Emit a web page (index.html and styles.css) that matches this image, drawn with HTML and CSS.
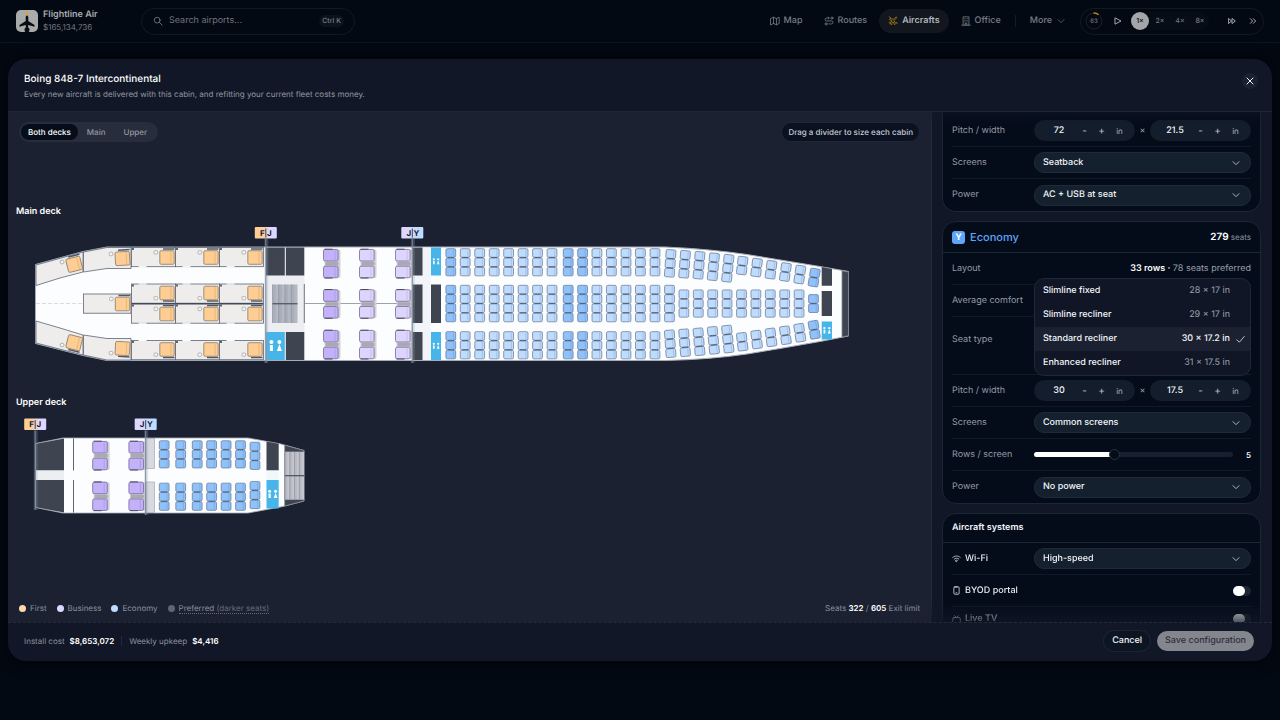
FILE: index.html
```html
<!DOCTYPE html>
<html lang="en">
<head>
<meta charset="utf-8">
<title>Flightline Air – Cabin configuration</title>
<link rel="stylesheet" href="styles.css">
</head>
<body>
<header class="topbar">
  <div class="brand">
    <svg class="brand-logo" viewBox="0 0 22 22" aria-hidden="true">
      <rect width="22" height="22" rx="5" fill="#a9abab"/>
      <rect x="10" y="2" width="2" height="4" fill="#d7a32c"/>
      <path d="M11 5.500c.9 0 1.300 1.200 1.300 2.600v3l6.200 4v1.600l-6.200-1.800-.2 2.400 1.500 1.700-.6 3h-4l-.6-3 1.500-1.700-.2-2.400-6.200 1.800v-1.600l6.200-4v-3c0-1.400.4-2.600 1.300-2.600z" fill="#0a0e14"/>
    </svg>
    <div class="brand-text">
      <strong>Flightline Air</strong>
      <span>$165,134,736</span>
    </div>
  </div>
  <label class="search">
    <svg class="icon" viewBox="0 0 24 24" aria-hidden="true"><circle cx="10" cy="10" r="7"/><path d="M15.500 15.500 22 22"/></svg>
    <input type="text" placeholder="Search airports..." aria-label="Search airports">
    <kbd>Ctrl K</kbd>
  </label>
  <nav class="nav">
    <a class="nav-link" href="#"><svg class="icon" viewBox="0 0 24 24" aria-hidden="true"><path d="M2 6l6.500-3 7 3L22 3v15l-6.500 3-7-3L2 21zM8.500 3v15M15.500 6v15"/></svg>Map</a>
    <a class="nav-link" href="#"><svg class="icon" viewBox="0 0 24 24" aria-hidden="true"><circle cx="5" cy="19" r="2.500"/><circle cx="19" cy="5" r="2.500"/><path d="M12 19h6a3.500 3.500 0 0 0 0-7H6a3.500 3.500 0 0 1 0-7h6M10 2.500 12.500 5 10 7.500"/></svg>Routes</a>
    <a class="nav-link is-active" href="#"><svg class="icon icon-gold" viewBox="0 0 24 24" aria-hidden="true"><path d="M15 10l4-4c1.500-1.500 2-3 1.500-3.500S18.500 2.500 17 4l-4 4-8-2-2 2 7 4-3 3-3-.5L2.500 16 6 18l2 3.500L9.500 20 9 17l3-3 4 7 2-2z"/><path d="M3 2l3 2M20 15l2 3"/></svg>Aircrafts</a>
    <a class="nav-link" href="#"><svg class="icon" viewBox="0 0 24 24" aria-hidden="true"><path d="M5 22V2h14v20M2 22h20M10 22v-4h4v4M9 6.500h1M14 6.500h1M9 10.500h1M14 10.500h1M9 14.500h1M14 14.500h1"/></svg>Office</a>
    <span class="nav-rule"></span>
    <button class="nav-link nav-more" type="button">More<svg class="icon icon-small" viewBox="0 0 24 24" aria-hidden="true"><path d="M3 8l9 9 9-9"/></svg></button>
  </nav>
  <div class="clock">
    <svg class="clock-ring" viewBox="0 0 18 18" role="img" aria-label="Progress 63">
      <circle cx="9" cy="9" r="8" fill="none" stroke="#1a212b" stroke-width="1"/>
      <path d="M8.500 1a8 8 0 0 1 5 1.600" fill="none" stroke="#c28b12" stroke-width="1.500"/>
      <text x="9" y="11" text-anchor="middle" class="clock-value">63</text>
    </svg>
    <button class="clock-btn" type="button" aria-label="Play"><svg class="icon icon-small" viewBox="0 0 24 24" aria-hidden="true"><path d="M4 3l17 9-17 9z"/></svg></button>
    <div class="speeds">
      <button class="speed is-on" type="button">1×</button>
      <button class="speed" type="button">2×</button>
      <button class="speed" type="button">4×</button>
      <button class="speed" type="button">8×</button>
    </div>
    <button class="clock-btn" type="button" aria-label="Fast forward"><svg class="icon icon-small" viewBox="0 0 24 24" aria-hidden="true"><path d="M2 5l9 7-9 7zM13 5l9 7-9 7z"/></svg></button>
    <button class="clock-btn" type="button" aria-label="Skip"><svg class="icon icon-small" viewBox="0 0 24 24" aria-hidden="true"><path d="M4 5l7 7-7 7M13 5l7 7-7 7"/></svg></button>
  </div>
</header>

<main class="stage">
  <section class="dialog" role="dialog" aria-labelledby="dialog-title">
    <header class="dialog-head">
      <div>
        <h1 id="dialog-title">Boing 848-7 Intercontinental</h1>
        <p>Every new aircraft is delivered with this cabin, and refitting your current fleet costs money.</p>
      </div>
      <button class="close" type="button" aria-label="Close"><svg class="icon icon-small" viewBox="0 0 24 24" aria-hidden="true"><path d="M3 3l18 18M21 3L3 21"/></svg></button>
    </header>

    <div class="dialog-body">
      <div class="canvas">
        <div class="canvas-bar">
          <div class="tabs">
            <button class="tab is-on" type="button">Both decks</button>
            <button class="tab" type="button">Main</button>
            <button class="tab" type="button">Upper</button>
          </div>
          <span class="hint">Drag a divider to size each cabin</span>
        </div>
        <div class="decks">
          <section class="deck">
            <h2>Main deck</h2>
            <svg id="main-deck" viewBox="16 224 904 140" role="img" aria-label="Main deck seat map"></svg>
          </section>
          <section class="deck">
            <h2>Upper deck</h2>
            <svg id="upper-deck" viewBox="16 415 904 102" role="img" aria-label="Upper deck seat map"></svg>
          </section>
        </div>
        <div class="canvas-foot">
          <ul class="legend">
            <li><i class="dot dot-first"></i>First</li>
            <li><i class="dot dot-business"></i>Business</li>
            <li><i class="dot dot-economy"></i>Economy</li>
            <li><i class="dot dot-preferred"></i><span class="preferred">Preferred <em>(darker seats)</em></span></li>
          </ul>
          <p>Seats <b>322</b> / <b>605</b> Exit limit</p>
        </div>
      </div>

      <aside class="side">
        <section class="card card-continued">
          <div class="row">
            <span class="label">Pitch / width</span>
            <div class="control pair">
              <span class="stepper"><input type="text" value="72" aria-label="First pitch"><button type="button" aria-label="Decrease">-</button><button type="button" aria-label="Increase">+</button><small>in</small></span>
              <span class="times">×</span>
              <span class="stepper"><input type="text" value="21.5" aria-label="First width"><button type="button" aria-label="Decrease">-</button><button type="button" aria-label="Increase">+</button><small>in</small></span>
            </div>
          </div>
          <div class="row">
            <label class="label" for="first-screens">Screens</label>
            <span class="control drop"><select id="first-screens"><option>Seatback</option></select><svg class="icon icon-small" viewBox="0 0 24 24" aria-hidden="true"><path d="M3 8l9 9 9-9"/></svg></span>
          </div>
          <div class="row">
            <label class="label" for="first-power">Power</label>
            <span class="control drop"><select id="first-power"><option>AC + USB at seat</option></select><svg class="icon icon-small" viewBox="0 0 24 24" aria-hidden="true"><path d="M3 8l9 9 9-9"/></svg></span>
          </div>
        </section>

        <section class="card">
          <header class="card-head">
            <h3 class="economy"><span class="badge">Y</span>Economy</h3>
            <span class="seat-total"><b>279</b> seats</span>
          </header>
          <div class="row">
            <span class="label">Layout</span>
            <span class="value"><b>33 rows ·</b> 78 seats preferred</span>
          </div>
          <div class="row"><span class="label">Average comfort</span></div>
          <div class="row row-tall">
            <span class="label">Seat type</span>
            <div class="control picker">
              <ul class="menu" role="listbox" aria-label="Seat type">
                <li role="option"><span>Slimline fixed</span><span class="dim">28 × 17 in</span></li>
                <li role="option"><span>Slimline recliner</span><span class="dim">29 × 17 in</span></li>
                <li role="option" aria-selected="true" class="is-on"><span>Standard recliner</span><span class="dim">30 × 17.2 in</span><svg class="icon icon-check" viewBox="0 0 24 24" aria-hidden="true"><path d="M2 13l7 6L22 4"/></svg></li>
                <li role="option"><span>Enhanced recliner</span><span class="dim">31 × 17.5 in</span></li>
              </ul>
            </div>
          </div>
          <div class="row">
            <span class="label">Pitch / width</span>
            <div class="control pair">
              <span class="stepper"><input type="text" value="30" aria-label="Economy pitch"><button type="button" aria-label="Decrease">-</button><button type="button" aria-label="Increase">+</button><small>in</small></span>
              <span class="times">×</span>
              <span class="stepper"><input type="text" value="17.5" aria-label="Economy width"><button type="button" aria-label="Decrease">-</button><button type="button" aria-label="Increase">+</button><small>in</small></span>
            </div>
          </div>
          <div class="row">
            <label class="label" for="eco-screens">Screens</label>
            <span class="control drop"><select id="eco-screens"><option>Common screens</option></select><svg class="icon icon-small" viewBox="0 0 24 24" aria-hidden="true"><path d="M3 8l9 9 9-9"/></svg></span>
          </div>
          <div class="row">
            <label class="label" for="eco-rows">Rows / screen</label>
            <div class="control slide"><input id="eco-rows" type="range" min="1" max="11" value="5"><output for="eco-rows">5</output></div>
          </div>
          <div class="row">
            <label class="label" for="eco-power">Power</label>
            <span class="control drop"><select id="eco-power"><option>No power</option></select><svg class="icon icon-small" viewBox="0 0 24 24" aria-hidden="true"><path d="M3 8l9 9 9-9"/></svg></span>
          </div>
        </section>

        <section class="card">
          <header class="card-head card-head-plain"><h3>Aircraft systems</h3></header>
          <div class="row">
            <label class="label system" for="wifi"><svg class="icon" viewBox="0 0 24 24" aria-hidden="true"><path d="M2 9c6-5 14-5 20 0M6 13.500c4-3 8-3 12 0M9.500 17.500c2-1.500 3-1.500 5 0L12 20z"/></svg>Wi-Fi</label>
            <span class="control drop"><select id="wifi"><option>High-speed</option></select><svg class="icon icon-small" viewBox="0 0 24 24" aria-hidden="true"><path d="M3 8l9 9 9-9"/></svg></span>
          </div>
          <div class="row">
            <label class="label system" for="byod"><svg class="icon" viewBox="0 0 24 24" aria-hidden="true"><rect x="5" y="2" width="14" height="20" rx="3"/><path d="M10 3h4M11 18h2"/></svg>BYOD portal</label>
            <input class="switch" id="byod" type="checkbox">
          </div>
          <div class="row row-short">
            <label class="label system" for="tv"><svg class="icon" viewBox="0 0 24 24" aria-hidden="true"><rect x="2" y="7" width="20" height="14" rx="3"/><path d="M7 2l5 5 5-5"/></svg>Live TV</label>
            <input class="switch" id="tv" type="checkbox">
          </div>
        </section>
      </aside>
    </div>

    <footer class="dialog-foot">
      <p class="costs">Install cost <b>$8,653,072</b><i></i>Weekly upkeep <b>$4,416</b></p>
      <div class="actions">
        <button class="btn" type="button">Cancel</button>
        <button class="btn btn-primary" type="button">Save configuration</button>
      </div>
    </footer>
  </section>
</main>
<script src="cabin.js"></script>
</body>
</html>
```

FILE: styles.css
```css
* { box-sizing: border-box; }
body {
  margin: 0;
  height: 100vh;
  display: flex;
  flex-direction: column;
  background: #030912;
  color: #f1f5f9;
  font: 9px/14px Inter, "Liberation Sans", sans-serif;
  text-rendering: geometricPrecision;
}
h1, h2, h3, p, ul { margin: 0; padding: 0; }
ul { list-style: none; }
button, input, select { font: inherit; color: inherit; margin: 0; text-rendering: inherit; }
button { border: 0; padding: 0; background: none; }
a { color: inherit; text-decoration: none; }
.icon { width: 10px; height: 10px; flex: none; fill: none; stroke: currentColor; stroke-width: 2; stroke-linecap: round; stroke-linejoin: round; }
.icon-small { width: 8px; height: 8px; stroke-width: 3; }

/* Top bar */
.topbar { flex: none; display: flex; align-items: center; height: 43px; padding: 0 16px; border-bottom: 1px solid #0e151e; color: #777d86; }
.brand { display: flex; align-items: center; gap: 5px; width: 125px; }
.brand-logo { width: 22px; height: 22px; flex: none; }
.brand-text { display: flex; flex-direction: column; line-height: 12px; font-size: 8px; }
.brand-text strong { font-size: 9px; font-weight: 600; color: #a9acb1; }
.search { display: flex; align-items: center; gap: 6px; width: 214px; height: 27px; padding: 0 10px 0 11px; border: 1px solid #121922; border-radius: 14px; }
.search input { flex: 1; min-width: 0; padding: 0; border: 0; background: none; outline: 0; }
.search input::placeholder { color: #6e747d; opacity: 1; }
.search kbd { padding: 0 3px; border-radius: 6px; background: #0c131c; font: 500 7px/12px Inter, sans-serif; }
.nav { display: flex; align-items: center; gap: 3px; margin-left: auto; font-weight: 500; }
.nav-link { display: flex; align-items: center; gap: 4px; height: 24px; padding: 0 9px; border-radius: 12px; }
.nav-link.is-active { background: #11161f; color: #b2b5ba; font-weight: 600; }
.icon-gold { color: #b07d10; }
.nav-rule { width: 1px; height: 12px; margin: 0 2px; background: #141a23; }
.nav-more { gap: 5px; }
.nav-more .icon { stroke-width: 2; }
.clock { display: flex; align-items: center; gap: 5px; height: 27px; margin-left: 6px; padding: 0 2px 0 4px; border: 1px solid #121922; border-radius: 14px; color: #a5a8ad; }
.clock-ring { width: 18px; height: 18px; margin-right: 2px; }
.clock-value { fill: #6e747d; font: 500 6px Inter, sans-serif; }
.clock-btn { display: grid; place-items: center; width: 16px; height: 16px; }
.speeds { display: flex; align-items: center; gap: 2px; margin: 0 10px 0 0; border-radius: 10px; background: #070d16; }
.speed { width: 18px; height: 18px; border-radius: 50%; font-size: 7px; font-weight: 500; line-height: 18px; color: #6e747d; text-align: center; }
.speed.is-on { background: #a4a7aa; color: #10151c; font-weight: 600; }

/* Dialog */
.stage { flex: 1; min-height: 0; display: flex; padding: 16px 8px 59px; }
.dialog { flex: 1; min-width: 0; display: flex; flex-direction: column; overflow: hidden; border-radius: 18px; background: #111726; box-shadow: 0 0 16px #01040a; }
.dialog-head { flex: none; display: flex; align-items: center; justify-content: space-between; height: 53px; padding: 1px 14px 0 16px; border-bottom: 1px solid #1d2433; }
.dialog-head h1 { font-size: 10px; font-weight: 500; line-height: 16px; color: #fff; }
.dialog-head p { font-size: 8px; line-height: 14px; color: #9197a3; }
.close { display: grid; place-items: center; width: 16px; height: 16px; margin-bottom: 10px; border-radius: 50%; background: #1a2130; }
.dialog-body { flex: 1; min-height: 0; display: grid; grid-template-columns: minmax(0, 1fr) 341px; }
.dialog-foot { flex: none; display: flex; align-items: center; justify-content: space-between; height: 39px; padding: 0 18px 2px 16px; border-top: 1px dashed #242c3a; }

/* Canvas */
.canvas { display: flex; flex-direction: column; padding: 10px 11px 7px 8px; background: #1b2130; min-height: 0; }
.canvas-bar, .canvas-foot { display: flex; align-items: center; justify-content: space-between; }
.tabs { display: flex; margin-left: 3px; padding: 2px; border-radius: 10px; background: #272d3b; }
.tab { height: 16px; padding: 0 7px; border-radius: 8px; font-size: 8px; font-weight: 500; line-height: 16px; color: #949aa6; }
.tab + .tab { padding: 0 9px; }
.tab.is-on { background: #060d1a; color: #fff; }
.hint { padding: 2px 6px; border: 1px solid #1d2736; border-radius: 10px; background: #0a1120; font-size: 8px; font-weight: 500; color: #c7cbd2; }
.decks { flex: 1; min-height: 0; display: flex; flex-direction: column; justify-content: center; gap: 32px; padding-bottom: 22px; }
.deck h2 { margin-bottom: 5px; font-size: 9px; font-weight: 600; line-height: 14px; color: #fff; }
.deck svg { display: block; width: 100%; height: auto; }
.tag-text { font: 700 8px Inter, sans-serif; fill: #171c2b; }
.canvas-foot { font-size: 8px; color: #8a909c; }
.canvas-foot b { color: #fff; font-weight: 600; }
.legend { display: flex; gap: 10px; margin-left: 3px; }
.legend li { display: flex; align-items: center; gap: 4px; }
.dot { width: 7px; height: 7px; border-radius: 50%; }
.dot-first { background: #fed7aa; }
.dot-business { background: #ddd6fe; }
.dot-economy { background: #bfdbfe; }
.dot-preferred { background: #5f6673; }
.preferred { line-height: 10px; border-bottom: 1px dotted #636977; }
.preferred em { font-style: normal; color: #666d79; }

/* Settings */
.side { display: flex; flex-direction: column; gap: 9px; padding: 0 11px 0 10px; overflow: hidden; border-left: 1px solid #222938; -webkit-mask-image: linear-gradient(#0008, #000 12px, #000 calc(100% - 22px), #0004); mask-image: linear-gradient(#0008, #000 12px, #000 calc(100% - 22px), #0004); }
.card { flex: none; padding: 0 9px; border: 1px solid #1c2635; border-radius: 14px; background: #040b19; }
.card-continued { padding-top: 3px; border-top: 0; border-radius: 0 0 14px 14px; }
.card-head { display: flex; align-items: center; justify-content: space-between; height: 31px; margin: 0 -9px; padding: 0 9px; border-bottom: 1px solid #1c2635; }
.card-head-plain { height: 29px; }
.card-head h3 { display: flex; align-items: center; gap: 5px; font-size: 9px; font-weight: 600; }
.card-head .economy { font-size: 11px; font-weight: 500; color: #60a5fa; }
.badge { width: 13px; height: 13px; border-radius: 3px; background: #60a5fa; color: #fff; font-size: 9px; font-weight: 700; line-height: 13px; text-align: center; }
.seat-total { font-size: 8px; color: #8a919e; }
.seat-total b { font-size: 10px; font-weight: 600; color: #fff; }
.row { display: flex; align-items: center; justify-content: space-between; min-height: 32px; border-bottom: 1px solid #101927; }
.row:last-child { border-bottom: 0; }
.row-tall { min-height: 58px; align-items: flex-start; padding-top: 12px; }
.row-tall .label { line-height: 21px; }
.row-short { min-height: 24px; }
.label { color: #949ba7; }
.system { display: flex; align-items: center; gap: 4px; color: #e8ebf0; font-weight: 500; }
.system .icon { width: 9px; height: 9px; }
.value { color: #9aa0ac; }
.value b { font-weight: 600; color: #fff; }
.control { width: 217px; height: 21px; }
.drop { display: flex; align-items: center; padding-right: 10px; border: 1px solid #202b3a; border-radius: 10px; background: #15202e; }
.drop select { flex: 1; appearance: none; height: 19px; padding: 0 8px; border: 0; outline: 0; background: none; color: #f1f5f9; font-weight: 500; }
.drop .icon { color: #aeb4bf; }
.pair { display: flex; align-items: center; justify-content: space-between; }
.stepper { display: grid; grid-template-columns: 34px 17px 17px 19px; align-items: center; width: 101px; height: 21px; padding-left: 8px; border-radius: 11px; background: #131d2b; text-align: center; color: #aeb4bf; }
.stepper input { width: 100%; min-width: 0; padding: 0; border: 0; background: none; text-align: center; font-weight: 500; color: #f1f5f9; }
.stepper button { font-size: 10px; font-weight: 500; }
.stepper small { font-size: 8px; }
.times { font-size: 9px; color: #9aa0ac; }
.slide { display: flex; align-items: center; justify-content: space-between; }
.slide input { appearance: none; width: 199px; height: 5px; border-radius: 3px; background: linear-gradient(90deg, #fff 40%, #16202e 40%); }
.slide input::-webkit-slider-thumb { appearance: none; width: 11px; height: 11px; border: 1px solid #2a3342; border-radius: 50%; background: #040b19; }
.slide output { font-size: 8px; font-weight: 600; }
.switch { appearance: none; display: flex; width: 18px; height: 10px; border-radius: 5px; background: #1d2532; }
.switch::before { content: ""; width: 12px; height: 10px; border-radius: 5px; background: #fff; }
.picker { position: relative; border-radius: 10px; background: #15202e; }
.menu { position: absolute; left: 0; right: 0; top: -51px; z-index: 2; overflow: hidden; border: 1px solid #202838; border-radius: 10px; background: #111626; }
.menu li { display: grid; grid-template-columns: 1fr auto 13px; align-items: center; column-gap: 6px; height: 24px; padding: 0 1px 0 8px; font-weight: 500; }
.menu .dim { font-weight: 400; color: #9aa0ac; }
.menu .is-on { background: #1b2130; }
.menu .is-on .dim { font-weight: 500; color: #f1f5f9; }
.icon-check { width: 9px; height: 9px; }

/* Footer */
.costs { display: flex; align-items: center; gap: 5px; font-size: 8px; color: #8a919e; }
.costs b { font-weight: 600; color: #fff; }
.costs i { width: 1px; height: 10px; margin: 0 2px; background: #232b3a; }
.actions { display: flex; gap: 7px; }
.btn { height: 20px; padding: 0 8px; border-radius: 10px; background: #0d1422; box-shadow: 0 0 0 1px #1c2433; font-weight: 500; }
.btn-primary { background: #84868e; box-shadow: none; color: #2b303c; }
```

FILE: cabin.js
```js
const NS = 'http://www.w3.org/2000/svg';
const COLORS = {
  dark: '#3f4550', lav: '#47b5ea', pale: '#eceef2', line: '#5d6573',
  eco: '#bfdbfe', ecoPref: '#8fc1fb', biz: '#ddd5fd', bizPref: '#c3b2fa', first: '#fdcd93'
};

function add(parent, name, attrs, text) {
  const node = document.createElementNS(NS, name);
  for (const key in attrs) node.setAttribute(key, attrs[key]);
  if (text) node.textContent = text;
  parent.appendChild(node);
  return node;
}
function box(p, x, y, w, h, fill, extra) {
  return add(p, 'rect', Object.assign({ x, y, width: w, height: h, fill }, extra));
}
function poly(p, points, fill, stroke) {
  return add(p, 'polygon', { points, fill, stroke: stroke || 'none', 'stroke-width': 0.8 });
}
function line(p, x1, y1, x2, y2, stroke, width, dash) {
  return add(p, 'line', { x1, y1, x2, y2, stroke, 'stroke-width': width || 0.8, 'stroke-dasharray': dash || 'none' });
}

// A block of economy seats, stacked across the aisle direction.
function ecoBlock(p, cx, cy, count, turn, preferred) {
  const g = add(p, 'g', { transform: `translate(${cx} ${cy}) rotate(${turn || 0})` });
  for (let i = 0; i < count; i++) {
    const y = (i - count / 2) * 9.3;
    box(g, -4.9, y + 0.4, 9.8, 8.6, preferred ? COLORS.ecoPref : COLORS.eco,
      { rx: 1.4, stroke: '#64748b', 'stroke-width': 0.7 });
    line(g, 2.7, y + 1.2, 2.7, y + 8.3, preferred ? '#6fa8ec' : '#93b6e6', 0.7);
    if (i) line(g, -3, y, 3, y, '#4b586c', 0.8);
  }
}

// Two business seats with the console between them.
function bizPair(p, x, y, preferred) {
  box(p, x + 1, y + 0.5, 16, 28.5, '#d3d2da', { rx: 2 });
  box(p, x + 2, y + 13, 13, 3.4, '#aaa9b2');
  for (const top of [y, y + 16.8]) {
    box(p, x, top + 0.4, 14.6, 11.6, preferred ? COLORS.bizPref : COLORS.biz,
      { rx: 1.6, stroke: '#756c92', 'stroke-width': 0.8 });
    line(p, x + 11.5, top + 1.5, x + 11.5, top + 11, preferred ? '#a594e2' : '#c0b6e6', 0.7);
  }
  line(p, x + 1, y + 0.2, x + 9, y + 0.2, '#514b66', 1);
  line(p, x + 1, y + 29, x + 9, y + 29, '#514b66', 1);
}

// A first class chair drawn round its centre.
function chair(p, cx, cy, turn, flip) {
  const g = add(p, 'g', { transform: `translate(${cx} ${cy}) rotate(${turn || 0})` });
  const edge = flip ? 8 : -8.5;
  line(g, -4, edge, 7.5, edge, '#515967', 1.5);
  box(g, -7.2, -6.8, 14.4, 13.6, COLORS.first, { rx: 1.4, stroke: '#8b7a68', 'stroke-width': 0.8 });
  line(g, 4, -6, 4, 6, '#e0ad72', 0.7);
  box(g, -13, flip ? 3.5 : -6.8, 3.6, 3.4, '#f6f5f3', { rx: 1, stroke: '#9b9da2', 'stroke-width': 0.7 });
}
function suite(p, x, y, flip) {
  box(p, x, y, 44, 19.2, '#eeedeb', { stroke: COLORS.line, 'stroke-width': 0.8 });
  line(p, x + 7, flip ? y : y + 19.2, x + 15, flip ? y : y + 19.2, '#fff', 1.2);
  box(p, x + 0.5, y + 0.5, 2, 2, COLORS.line);
  chair(p, x + 35.5, y + (flip ? 9 : 10), 0, flip);
}
function lavatory(p, x, y, w, h, scale) {
  box(p, x, y, w, h, COLORS.lav);
  const g = add(p, 'g', { fill: '#fff', transform: `translate(${x + w / 2} ${y + h / 2}) scale(${scale})` });
  add(g, 'circle', { cx: -4, cy: -4, r: 2 });
  box(g, -5.5, -1, 3, 6, '#fff');
  add(g, 'circle', { cx: 4, cy: -4, r: 2 });
  add(g, 'path', { d: 'M4 -2L6.5 5H1.5z' });
}
function stairs(p, x, y, w, h, steps, fill) {
  box(p, x, y, w, h, fill);
  for (let i = 0; i < steps; i++) {
    box(p, x + i * w / steps, y, w / steps / 2, h, '#8d94a1', { opacity: 0.25 });
    line(p, x + i * w / steps, y, x + i * w / steps, y + h, '#858b97', 0.6);
  }
  line(p, x, y + h / 2, x + w, y + h / 2, '#4a505c', 1.2);
}
function divider(p, x, top, bottom, left, right) {
  box(p, x - 1.5, top + 12, 4, bottom - top - 12, '#94a3b8', { opacity: 0.28 });
  line(p, x, top + 12, x, bottom, '#7c8594', 1);
  const fills = { F: '#fdcd93', J: '#ddd6fe', Y: '#bfdbfe' };
  const id = `${p.id}-${left}${right}`;
  const blend = add(p, 'linearGradient', { id });
  add(blend, 'stop', { offset: 0.3, 'stop-color': fills[left] });
  add(blend, 'stop', { offset: 0.7, 'stop-color': fills[right] });
  box(p, x - 11, top, 22, 11.5, `url(#${id})`, { rx: 1 });
  line(p, x, top + 1.5, x, top + 10.5, '#171c2b', 0.8);
  add(p, 'text', { x: x - 1.2, y: top + 8.7, 'text-anchor': 'end', class: 'tag-text' }, left);
  add(p, 'text', { x: x + 1.2, y: top + 8.7, class: 'tag-text' }, right);
}

function drawMain(svg) {
  add(svg, 'path', {
    d: 'M35.5 264.5L83 251.5 107 247H665Q710 249 747 254.5L820 266.5 848.5 271.5V336L820 341.5 780 348.5 747 354Q710 359.5 665 360.5H107L83 355.5 35.5 343.5Z',
    fill: '#fcfdff', stroke: '#a4adba', 'stroke-width': 1
  });

  // First class suites.
  poly(svg, '36,265 83,252 83,272 60,278 36,285.5', '#eeedeb', COLORS.line);
  poly(svg, '83.5,252 107,247.5 131,247.5 131,268.5 107,268.5 83.5,272', '#eeedeb', COLORS.line);
  poly(svg, '36,321 60,328 83,335 83,355 36,343', '#eeedeb', COLORS.line);
  poly(svg, '83.5,335 107,338.5 131,338.5 131,360 107,360 83.5,355', '#eeedeb', COLORS.line);
  chair(svg, 74.2, 264.3, -14);
  chair(svg, 122.5, 258.5, -3);
  chair(svg, 74.2, 342.7, 14, true);
  chair(svg, 122.5, 348.5, 3, true);
  box(svg, 83.5, 294, 47.5, 19.2, '#eeedeb', { stroke: COLORS.line, 'stroke-width': 0.8 });
  chair(svg, 122.5, 304, 0);
  line(svg, 36, 303.5, 83, 303.5, '#c9ced6', 0.7, '4 2');
  for (const x of [131.5, 175.5, 219.5]) {
    suite(svg, x, 247.5);
    suite(svg, x, 284, true);
    suite(svg, x, 304);
    suite(svg, x, 340.5, true);
    line(svg, x, 303.6, x + 44, 303.6, '#434a57', 1.2);
  }

  // Service area between first and business.
  box(svg, 265.5, 275.5, 39, 57, COLORS.pale);
  box(svg, 266, 247.5, 18.8, 28, COLORS.dark);
  box(svg, 285.8, 247.5, 18.5, 28, COLORS.dark);
  stairs(svg, 272.5, 284.5, 25, 38.5, 4, '#b3b8c3');
  lavatory(svg, 266, 332, 18.8, 28, 1);
  box(svg, 285.8, 332, 18.5, 28, COLORS.dark);
  line(svg, 304.3, 284, 304.3, 323, '#6b7280', 1);
  line(svg, 304.5, 303.5, 412, 303.5, '#878b93', 0.8);

  [323.5, 359.5, 395.5].forEach((x, i) => {
    for (const y of [249, 289.3, 330]) bizPair(svg, x, y, i === 0);
  });

  // Service area between business and economy.
  box(svg, 412.5, 247.5, 18, 112.5, '#f1f4f9');
  for (const [y, h] of [[247.5, 28], [284.5, 38.5], [332, 28]]) box(svg, 412.5, y, 10, h, COLORS.dark);
  lavatory(svg, 431, 247.5, 10, 28, 0.55);
  box(svg, 431, 284.5, 10, 38.5, COLORS.dark);
  lavatory(svg, 431, 332, 10, 28, 0.55);

  const straight = [450.8, 465.2, 479.7, 494.2, 508.6, 523.1, 537.5, 552, 568.2, 582.6, 596.9, 611.4, 626, 640.4, 655];
  straight.forEach((x, i) => {
    const preferred = i === 0 || i === 8 || i === 9;
    ecoBlock(svg, x, 262.2, 3, 0, preferred);
    ecoBlock(svg, x, 303.5, 4, 0, preferred);
    ecoBlock(svg, x, 345.2, 3, 0, preferred);
  });
  // Rows in the tapering tail: top block y, side seats, middle seats, bottom block y.
  const tail = [
    [263.3, 3, 4, 343.7], [264.2, 3, 3, 342.7], [265.2, 3, 3, 341.7], [266.7, 3, 3, 340.3],
    [268.2, 3, 3, 339], [265.5, 2, 3, 341.7], [267.5, 2, 3, 339.5], [269.7, 2, 3, 337.3],
    [272, 2, 3, 335.2], [274.5, 2, 3, 332.7], [277.5, 2, 2, 329.7]
  ];
  tail.forEach(([top, sides, middle, bottom], i) => {
    const x = 670.2 + i * 14.4;
    const turn = 4 + i * 0.5;
    ecoBlock(svg, x, top, sides, turn, i === 10);
    ecoBlock(svg, x - 0.7, 303.5, middle, 0, i === 10);
    ecoBlock(svg, x, bottom, sides, -turn, i === 10);
  });

  poly(svg, '821.7,267 832,269 832,285.7 821.7,285.7', COLORS.dark);
  box(svg, 821.7, 291, 10.3, 25, COLORS.dark);
  lavatory(svg, 821.7, 321.5, 10.3, 18, 0.6);
  poly(svg, '842,270.7 848.5,272 848.5,335.7 842,337', COLORS.dark, '#838a96');
  divider(svg, 265.8, 227, 363, 'F', 'J');
  divider(svg, 412.3, 227, 363, 'J', 'Y');
}

function drawUpper(svg) {
  poly(svg, '35.5,443.5 63,438 248,438 280,443.8 304,450.5 304,501 283,506.5 248,513 63,513 35.5,507.5', '#fcfdff', '#a4adba');
  poly(svg, '36,443.7 64,438.5 64,470.5 36,470.5', COLORS.dark);
  poly(svg, '36,480 64,480 64,512.5 36,507.3', COLORS.dark);
  line(svg, 73.5, 438.5, 73.5, 470.5, '#4b5260', 0.9);
  line(svg, 73.5, 480, 73.5, 512.5, '#4b5260', 0.9);
  box(svg, 36, 470.5, 28, 9.5, COLORS.pale);
  for (const x of [92.7, 128.9]) {
    bizPair(svg, x, 441, true);
    bizPair(svg, x, 481.7, true);
  }
  box(svg, 146, 438.5, 8.5, 30, '#d8d8e1', { stroke: '#a6a8b4', 'stroke-width': 0.7 });
  box(svg, 146, 482, 8.5, 30.5, '#d8d8e1', { stroke: '#a6a8b4', 'stroke-width': 0.7 });
  [164.2, 180.7, 197.2, 211.6, 226.1, 240.5].forEach(x => {
    ecoBlock(svg, x, 454.3, 3, 0, true);
    ecoBlock(svg, x, 496.7, 3, 0, true);
  });
  ecoBlock(svg, 255, 455.8, 3, 0, true);
  ecoBlock(svg, 255, 495, 3, 0, true);
  poly(svg, '266.5,441.5 278.7,443.7 278.7,470.5 266.5,470.5', COLORS.dark);
  lavatory(svg, 266.5, 480, 12.2, 28.5, 0.75);
  box(svg, 266.5, 470.5, 12.2, 9.5, '#eff8fb');
  poly(svg, '284.7,445.2 304,450.5 304,501 284.7,506', COLORS.dark, '#838a96');
  stairs(svg, 285, 451.7, 19, 48, 4, '#c6c6cf');
  divider(svg, 35.2, 418.5, 510, 'F', 'J');
  divider(svg, 145.7, 418.5, 515, 'J', 'Y');
}

drawMain(document.getElementById('main-deck'));
drawUpper(document.getElementById('upper-deck'));
```
